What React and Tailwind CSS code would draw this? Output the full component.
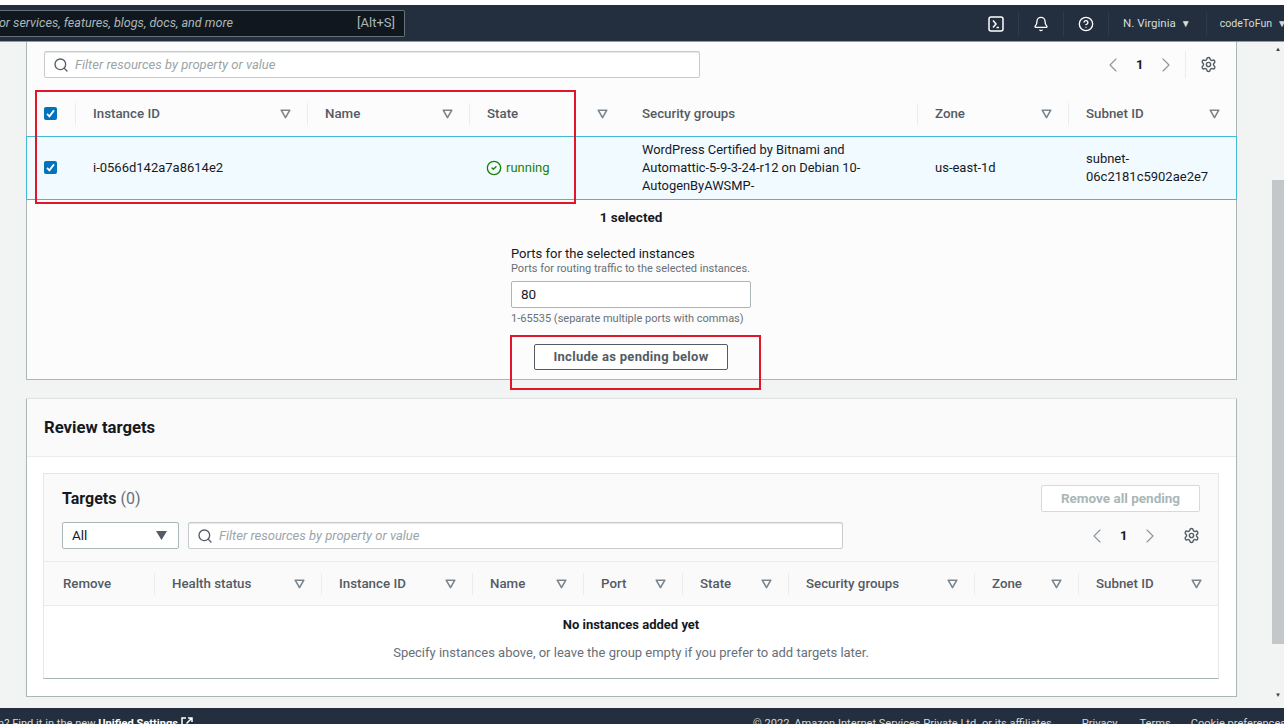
import React from "react";
import { Bell, ChevronLeft, ChevronRight, CircleCheck, CircleHelp, Search, Settings } from "lucide-react";

const TOP_COLS = "grid-cols-[48px_232px_162px_155px_293px_151px_1fr]";
const BOTTOM_COLS = "grid-cols-[110px_167px_151px_111px_99px_106px_186px_104px_1fr]";

const FilterIcon = () => (
  <svg width="11" height="10" viewBox="0 0 11 10" className="shrink-0">
    <path d="M1.2 1.2h8.6L5.5 8.6z" fill="none" stroke="#7b858e" strokeWidth="1.6" strokeLinejoin="round" />
  </svg>
);

const CheckBox = () => (
  <span className="flex h-[13px] w-[13px] items-center justify-center rounded-[2px] bg-[#0073bb]">
    <svg width="11" height="11" viewBox="0 0 11 11">
      <path d="M2 5.8l2.4 2.6L9 2.4" fill="none" stroke="#fff" strokeWidth="1.8" />
    </svg>
  </span>
);

const HeadCell = ({ label, sort = true, pad = "pl-[17px] pr-[16px]", sep = true }) => (
  <div className={`flex h-[22px] items-center justify-between ${pad} ${sep ? "border-l border-[#eaeded]" : ""}`}>
    <span className="text-[13.3px] font-medium text-[#545b64]">{label}</span>
    {sort && <FilterIcon />}
  </div>
);

const FilterBox = ({ width }) => (
  <div className={`flex h-[27px] ${width} items-center rounded-[2px] border border-[#c6cbcd] bg-white pl-[8px] shadow-[inset_0_1px_1px_#e4e7e8]`}>
    <Search size={16} strokeWidth={2} className="text-[#545b64]" />
    <span className="ml-[6px] text-[13px] italic text-[#9aa5a8]">Filter resources by property or value</span>
  </div>
);

const Pager = () => (
  <div className="flex items-center text-[#8a949c]">
    <ChevronLeft size={24} strokeWidth={1.1} />
    <span className="ml-[11px] mr-[12px] w-[6px] text-center text-[13px] font-bold text-[#16191f]">1</span>
    <ChevronRight size={24} strokeWidth={1.1} />
  </div>
);

const Gear = () => <Settings size={17} strokeWidth={2} className="text-[#545b64]" />;

const NavSep = () => <span className="h-[24px] w-px bg-[#2f3b4a]" />;

const App = () => (
  <div className="relative flex h-screen w-full flex-col overflow-hidden bg-[#f2f3f3] font-['Roboto',sans-serif] text-[#16191f]">
    <div className="h-[5px] shrink-0 bg-white" />

    {/* top nav */}
    <header className="flex h-[37px] shrink-0 items-center justify-between border-b border-[#8d99a8] bg-[#232f3e] text-[#d5dbdb]">
      <div className="flex h-[27px] w-[405px] items-center justify-between overflow-hidden rounded-r-[2px] border border-l-0 border-[#687078] bg-[#10171f] pr-[9px]">
        <span className="flex w-[233px] shrink-0 justify-end whitespace-nowrap text-[12.6px] italic text-[#aab7b8]">Search for services, features, blogs, docs, and more</span>
        <span className="text-[13px] text-[#aab7b8]">[Alt+S]</span>
      </div>
      <div className="flex items-center pt-[1px]">
        <svg width="16" height="16" viewBox="0 0 16 16" fill="none" className="mr-[14px]">
          <rect x="1" y="1" width="14" height="14" rx="2" stroke="#fff" strokeWidth="1.5" />
          <path d="M5 4.5l3 3.5-3 3.5M8.5 11.5h2.5" stroke="#fff" strokeWidth="1.5" />
        </svg>
        <NavSep />
        <Bell size={16} strokeWidth={2} className="mx-[14px] text-white" />
        <NavSep />
        <CircleHelp size={16} strokeWidth={2} className="mx-[14px] text-white" />
        <NavSep />
        <span className="ml-[14px] text-[11.5px]">N. Virginia</span>
        <span className="ml-[5px] mr-[15px] text-[10px]">▼</span>
        <NavSep />
        <span className="ml-[13px] whitespace-nowrap text-[10.6px]">codeToFun</span>
        <span className="ml-[5px] mr-[-3px] text-[10px]">▼</span>
      </div>
    </header>

    {/* page body */}
    <div className="flex min-h-0 flex-1">
      <main className="w-[1272px] shrink-0 pl-[26px]">
        <section className="h-[338px] w-[1211px] border-x border-b border-[#aab7b8] bg-[#fcfcfc]">
          <div className="flex h-[36px] items-end justify-between pl-[17px] pr-[19px]">
            <FilterBox width="w-[656px]" />
            <div className="flex h-[27px] items-center">
              <Pager />
              <span className="ml-[7px] h-[27px] w-px bg-[#eaeded]" />
              <span className="ml-[14px]"><Gear /></span>
            </div>
          </div>

          <div className={`grid ${TOP_COLS} mt-[13px] h-[45px] items-center`}>
            <div className="pl-[17px]"><CheckBox /></div>
            <HeadCell label="Instance ID" />
            <HeadCell label="Name" />
            <HeadCell label="State" />
            <HeadCell label="Security groups" sort={false} sep={false} pad="pl-[18px]" />
            <HeadCell label="Zone" />
            <HeadCell label="Subnet ID" />
          </div>

          <div className={`mx-[-1px] grid ${TOP_COLS} h-[64px] items-center border border-[#44b9d6] bg-[#f1faff] text-[13px] leading-[18px]`}>
            <div className="mb-[2px] pl-[17px]"><CheckBox /></div>
            <div className="pl-[18px]">i-0566d142a7a8614e2</div>
            <div />
            <div className="flex items-center gap-[4px] pl-[17px] text-[#1d8102]">
              <CircleCheck size={16} strokeWidth={2} />
              <span>running</span>
            </div>
            <div className="pl-[18px] pr-[30px] text-[12.9px]">WordPress Certified by Bitnami and Automattic-5-9-3-24-r12 on Debian 10-AutogenByAWSMP-</div>
            <div className="pl-[18px]">us-east-1d</div>
            <div className="pl-[18px] pr-[20px]">subnet-<br />06c2181c5902ae2e7</div>
          </div>

          <div className="mt-[8px] pr-[1px] text-center text-[13.5px] font-bold leading-[18px]">1 selected</div>

          <div className="ml-[484px] mt-[19px] w-[240px]">
            <div className="text-[13px] leading-[18px]">Ports for the selected instances</div>
            <div className="text-[11px] leading-[12px] text-[#687078]">Ports for routing traffic to the selected instances.</div>
            <div className="mt-[6px] flex h-[27px] items-center rounded-[2px] border border-[#aab7b8] bg-white pl-[9px] text-[13.5px]">80</div>
            <div className="mt-[5px] whitespace-nowrap text-[11px] leading-[12px] text-[#687078]">1-65535 (separate multiple ports with commas)</div>
          </div>

          <div className="ml-[507px] mt-[19px]">
            <button className="h-[26px] w-[194px] rounded-[2px] border border-[#545b64] bg-white text-[13px] font-bold tracking-[0.3px] text-[#545b64]">
              Include as pending below
            </button>
          </div>
        </section>

        <section className="mt-[19px] h-[298px] w-[1211px] border-x border-b border-[#aab7b8] bg-white shadow-[0_-1px_1px_#dfe3e4]">
          <div className="flex h-[58px] items-center border-b border-[#eaeded] bg-[#fafafa] pl-[17px] text-[16.7px] font-bold">
            Review targets
          </div>

          <div className="ml-[16px] mt-[16px] h-[206px] w-[1176px] border border-[#e4e7e8] border-b-[#aab7b8] bg-white">
            <div className="h-[88px] border-b border-[#eaeded] bg-[#fafafa] px-[18px] pt-[11px]">
              <div className="flex h-[27px] items-center justify-between">
                <div className="text-[16px] font-bold">Targets <span className="font-normal text-[#687078]">(0)</span></div>
                <div className="flex h-[27px] w-[159px] items-center justify-center rounded-[2px] border border-[#d5dbdb] bg-white text-[13.5px] font-bold text-[#aab7b8]">
                  Remove all pending
                </div>
              </div>
              <div className="mt-[10px] flex items-center justify-between">
                <div className="flex items-center gap-[9px]">
                  <div className="flex h-[27px] w-[117px] items-center justify-between rounded-[2px] border border-[#aab7b8] bg-white pl-[9px] pr-[11px] text-[13.5px]">
                    All
                    <svg width="11" height="9" viewBox="0 0 11 9"><path d="M0 0h11L5.5 9z" fill="#545b64" /></svg>
                  </div>
                  <FilterBox width="w-[655px]" />
                </div>
                <div className="flex items-center">
                  <Pager />
                  <span className="ml-[21px]"><Gear /></span>
                </div>
              </div>
            </div>

            <div className={`grid ${BOTTOM_COLS} h-[44px] items-center border-b border-[#eaeded] bg-[#fafafa] pt-[1px]`}>
              <HeadCell label="Remove" sort={false} pad="pl-[19px]" sep={false} />
              <HeadCell label="Health status" />
              <HeadCell label="Instance ID" />
              <HeadCell label="Name" />
              <HeadCell label="Port" />
              <HeadCell label="State" />
              <HeadCell label="Security groups" />
              <HeadCell label="Zone" />
              <HeadCell label="Subnet ID" />
            </div>

            <div className="pt-[10px] text-center">
              <div className="text-[13px] font-bold leading-[18px]">No instances added yet</div>
              <div className="mt-[10px] text-[13px] leading-[18px] text-[#687078]">Specify instances above, or leave the group empty if you prefer to add targets later.</div>
            </div>
          </div>
        </section>
      </main>

      {/* scrollbar */}
      <div className="flex flex-1 flex-col items-center">
        <span className="mt-[4px] text-[6px] leading-[6px] text-[#3c3c3c]">▲</span>
        <div className="mt-[128px] h-[464px] w-full bg-[#c4c7c9]" />
        <span className="mt-[48px] text-[6px] leading-[6px] text-[#3c3c3c]">▼</span>
      </div>
    </div>

    {/* footer */}
    <footer className="flex h-[16px] shrink-0 justify-between overflow-hidden bg-[#232f3e] pt-[9px] text-[11.1px] leading-[14px] text-[#d5dbdb]">
      <div className="flex w-[193px] shrink-0 items-start justify-end whitespace-nowrap">
        <span>Looking for language selection? Find it in the new&nbsp;</span>
        <span className="font-bold text-white">Unified Settings</span>
        <svg width="12" height="12" viewBox="0 0 12 12" fill="none" className="ml-[3px] shrink-0">
          <path d="M5 1H1v10h10V7M7 1h4v4M11 1L5.5 6.5" stroke="#fff" strokeWidth="1.5" />
        </svg>
      </div>
      <div className="mr-[-2px] flex whitespace-nowrap">
        <span>© 2022, Amazon Internet Services Private Ltd. or its affiliates.</span>
        <span className="ml-[27px]">Privacy</span>
        <span className="ml-[22px]">Terms</span>
        <span className="ml-[20px]">Cookie preferences</span>
      </div>
    </footer>

    {/* red annotation boxes drawn over the screenshot */}
    <div className="absolute left-[35px] top-[90px] h-[114px] w-[541px] border-2 border-[#e0162b]" />
    <div className="absolute left-[510px] top-[335px] h-[55px] w-[251px] border-2 border-[#e0162b]" />
  </div>
);

export default App;
